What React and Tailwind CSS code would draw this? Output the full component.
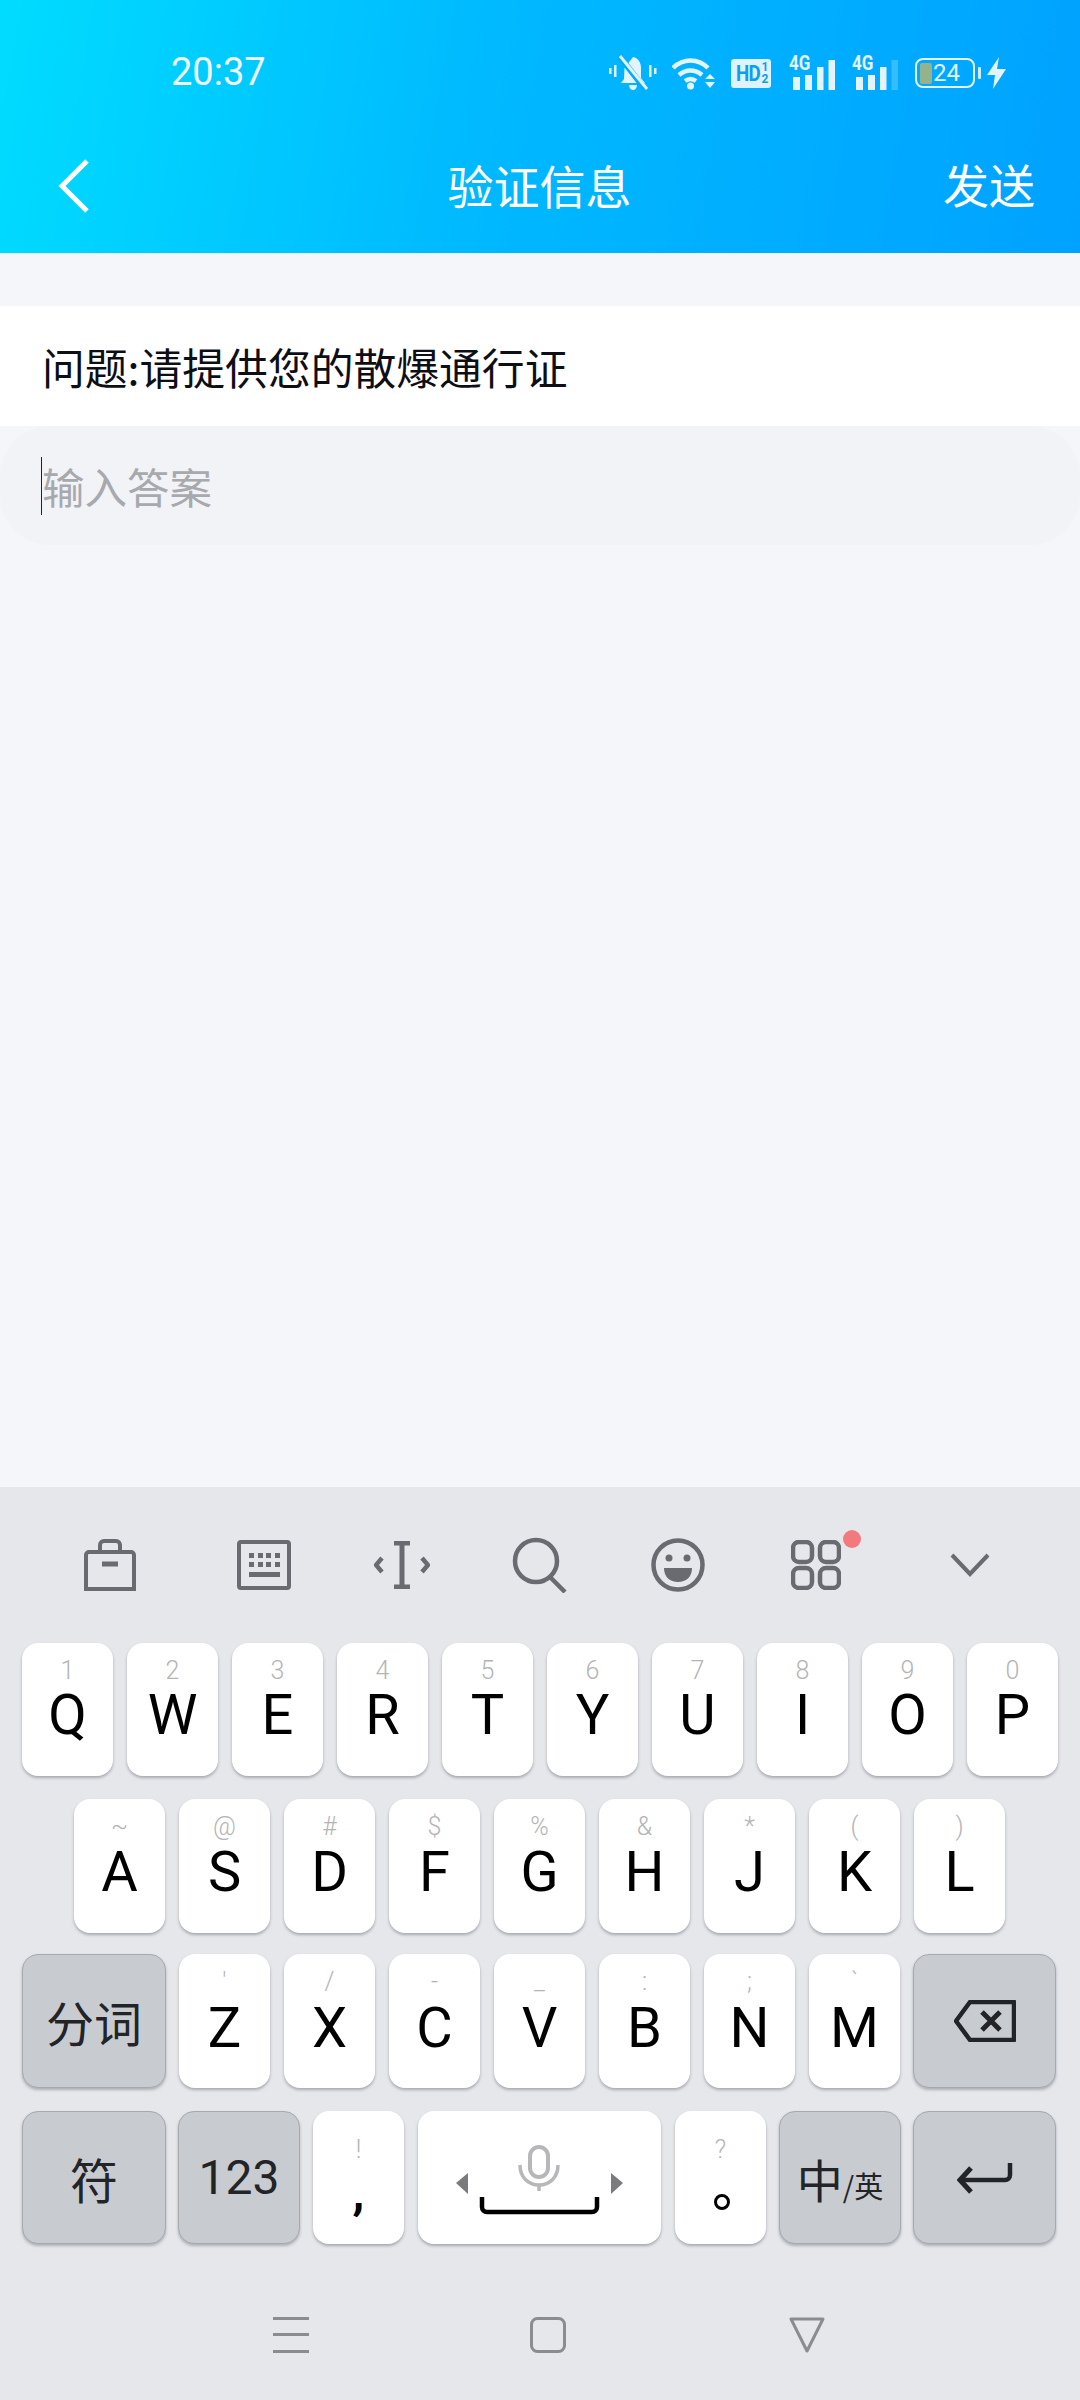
const CJK = '[font-family:"Noto_Sans_CJK_SC",sans-serif]';

const rows = [
  [['Q', '1'], ['W', '2'], ['E', '3'], ['R', '4'], ['T', '5'], ['Y', '6'], ['U', '7'], ['I', '8'], ['O', '9'], ['P', '0']],
  [['A', '~'], ['S', '@'], ['D', '#'], ['F', '$'], ['G', '%'], ['H', '&'], ['J', '*'], ['K', '('], ['L', ')']],
  [['Z', "'"], ['X', '/'], ['C', '-'], ['V', '_'], ['B', ':'], ['N', ';'], ['M', '`']],
];

function Key({ letter, hint, gap = 'mt-[3px]' }) {
  return (
    <div className="w-[91px] h-full bg-white rounded-[16px] shadow-[0_2px_3px_rgba(90,95,105,0.45)] flex flex-col items-center pt-[15px] font-['Roboto']">
      <span className="h-[26px] text-[25px] leading-[26px] font-light text-[#b4b4b6]">{hint}</span>
      <span className={`${gap} h-[56px] text-[56px] leading-[56px] text-black`}>{letter}</span>
    </div>
  );
}

function GrayKey({ className, children }) {
  return (
    <div className={`h-full bg-[#c8cbd0] border border-[#a6a9ae] rounded-[16px] shadow-[0_2px_3px_rgba(90,95,105,0.4)] flex items-center justify-center text-[#222427] ${className}`}>
      {children}
    </div>
  );
}

function SmallKey({ hint, className = '', children }) {
  return (
    <div className={`w-[91px] h-full bg-white rounded-[16px] shadow-[0_2px_3px_rgba(90,95,105,0.45)] flex flex-col items-center pt-[26px] font-['Roboto'] ${className}`}>
      <span className="h-[26px] text-[25px] leading-[26px] font-light text-[#b4b4b6]">{hint}</span>
      {children}
    </div>
  );
}

function StatusIcons() {
  const light = '#e3f4ff';
  return (
    <div className="flex items-center mt-[3px]">
      {/* muted bell */}
      <svg width="48" height="36" viewBox="0 0 48 36">
        <g fill={light}>
          <rect x="0" y="13" width="2.5" height="6" />
          <rect x="5" y="10" width="2.5" height="12" />
          <rect x="40" y="10" width="2.5" height="12" />
          <rect x="45" y="13" width="2.5" height="6" />
          <path d="M24 2c5 1 8 5 8 11v10l4 5H12l3-4 .5-11L24 2z" />
          <path d="M20 30h8c0 3-2 5-4 5s-4-2-4-5z" />
        </g>
        <path d="M11 2l25 32" stroke="#00aaff" strokeWidth="6" />
        <path d="M11 1l27 33" stroke={light} strokeWidth="3" />
      </svg>
      {/* wifi */}
      <svg width="44" height="34" viewBox="0 0 44 34" className="ml-[15px]">
        <g fill="none" stroke={light} strokeWidth="4.5">
          <path d="M1 12c10-10 25-10 35 0" />
          <path d="M7 19c7-6 16-6 23 0" />
          <path d="M13 25c4-3 7-3 11 0" />
        </g>
        <circle cx="18.5" cy="30" r="3.5" fill={light} />
        <path d="M33 23l5-5 5 5zM33 26h10l-5 6z" fill={light} />
      </svg>
      {/* HD */}
      <div className="ml-[15px] w-[40px] h-[29px] bg-[#dff2ff] rounded-[3px] flex items-center justify-center font-['Roboto'] font-bold text-[#0a9fef]">
        <span className="text-[22px] leading-[29px] tracking-[-1px] scale-x-[0.85]">HD</span>
        <span className="flex flex-col text-[12px] leading-[12px]">
          <span>1</span>
          <span>2</span>
        </span>
      </div>
      {/* sim 1 */}
      <Signal className="ml-[18px]" last={light} />
      {/* sim 2 */}
      <Signal className="ml-[17px]" last="#35bdff" />
      {/* battery */}
      <div className="ml-[17px] relative w-[60px] h-[30px] border-[2.5px] border-[#e3f4ff] rounded-[8px] flex items-center font-['Roboto'] text-[#e3f4ff]">
        <div className="ml-[3px] w-[12px] h-[21px] bg-[#94b38a] rounded-[2px]" />
        <span className="ml-[1px] text-[24px] leading-[24px]">24</span>
        <div className="absolute right-[-8px] top-[7px] w-[3px] h-[12px] bg-[#cdeeff] rounded-[1px]" />
      </div>
      <svg width="19" height="32" viewBox="0 0 19 32" className="ml-[12px]">
        <path d="M12 0L0 18h8l-2 14L19 12h-9z" fill={light} />
      </svg>
    </div>
  );
}

function Signal({ className, last }) {
  const light = '#e3f4ff';
  return (
    <div className={`relative w-[46px] h-[33px] ${className}`}>
      <span className="absolute left-0 top-[-4px] text-[20px] leading-[20px] font-bold font-['Roboto'] text-[#e3f4ff] scale-x-[0.85] origin-left">4G</span>
      <svg width="46" height="33" viewBox="0 0 46 33">
        <rect x="4" y="20" width="7" height="13" fill={light} />
        <rect x="16" y="18" width="7" height="15" fill={light} />
        <rect x="28" y="10" width="6.5" height="23" fill={light} />
        <rect x="39.5" y="3" width="6.5" height="30" fill={last} />
      </svg>
    </div>
  );
}

function ToolIcon({ children, className = '' }) {
  return <div className={`w-[138px] h-[64px] flex items-center justify-center ${className}`}>{children}</div>;
}

function Toolbar() {
  const c = '#6a6b70';
  return (
    <div className="h-[156px] px-[41px] flex items-center">
      <ToolIcon>
        <svg width="52" height="52" viewBox="0 0 52 52" fill="none" stroke={c} strokeWidth="4">
          <path d="M2 50V16a3 3 0 0 1 3-3h42a3 3 0 0 1 3 3v34z" />
          <path d="M16 13V6a4 4 0 0 1 4-4h12a4 4 0 0 1 4 4v7" />
          <path d="M18 25h16" strokeWidth="5" />
        </svg>
      </ToolIcon>
      <ToolIcon className="ml-[16px]">
        <svg width="54" height="50" viewBox="0 0 54 50" fill="none" stroke={c}>
          <rect x="2" y="2" width="50" height="46" rx="2" strokeWidth="4" />
          <g fill={c} stroke="none">
            <rect x="12" y="13" width="5" height="5" />
            <rect x="21" y="13" width="5" height="5" />
            <rect x="29" y="13" width="5" height="5" />
            <rect x="38" y="13" width="5" height="5" />
            <rect x="12" y="22" width="5" height="5" />
            <rect x="21" y="22" width="5" height="5" />
            <rect x="29" y="22" width="5" height="5" />
            <rect x="38" y="22" width="5" height="5" />
            <rect x="12" y="32" width="31" height="5" />
          </g>
        </svg>
      </ToolIcon>
      <ToolIcon>
        <svg width="56" height="48" viewBox="0 0 56 48" fill="none" stroke={c}>
          <path d="M20 2h16M28 2v44M20 46h16" strokeWidth="5" />
          <path d="M8 17l-6 7 6 7M48 17l6 7-6 7" strokeWidth="4.5" />
        </svg>
      </ToolIcon>
      <ToolIcon>
        <svg width="56" height="56" viewBox="0 0 56 56" fill="none" stroke={c} strokeWidth="4.5">
          <circle cx="24" cy="24" r="21" />
          <path d="M38 40l15 15" />
        </svg>
      </ToolIcon>
      <ToolIcon>
        <svg width="54" height="54" viewBox="0 0 54 54" fill="none" stroke={c}>
          <circle cx="27" cy="27" r="24.5" strokeWidth="4.5" />
          <circle cx="18" cy="20" r="3.5" fill={c} stroke="none" />
          <circle cx="36" cy="20" r="3.5" fill={c} stroke="none" />
          <path d="M13 30h28c0 9-6 14-14 14s-14-5-14-14z" fill={c} stroke="none" />
        </svg>
      </ToolIcon>
      <ToolIcon className="relative">
        <svg width="50" height="50" viewBox="0 0 50 50" fill="none" stroke={c} strokeWidth="4.5">
          <rect x="2" y="2" width="19" height="20" rx="6" />
          <rect x="29" y="2" width="19" height="20" rx="6" />
          <rect x="2" y="28" width="19" height="20" rx="6" />
          <rect x="29" y="28" width="19" height="20" rx="6" />
        </svg>
        <div className="absolute left-[96px] top-[-3px] w-[18px] h-[18px] rounded-full bg-[#f27a7f]" />
      </ToolIcon>
      <ToolIcon className="ml-[16px]">
        <svg width="40" height="24" viewBox="0 0 40 24" fill="none" stroke={c} strokeWidth="4">
          <path d="M2 2l18 19L38 2" />
        </svg>
      </ToolIcon>
    </div>
  );
}

export default function App() {
  return (
    <div className={`w-[1080px] h-[2400px] flex flex-col bg-[#f4f6fa] overflow-hidden ${CJK}`}>
      <header className="h-[253px] shrink-0 bg-[linear-gradient(100deg,#00dcff_0%,#00b9ff_45%,#00a2ff_100%)] text-white">
        <div className="h-[144px] pl-[171px] pr-[74px] pt-[52px] flex items-start justify-between">
          <span className="text-[38px] leading-[40px] font-['Roboto'] text-[#f2fbff]">20:37</span>
          <StatusIcons />
        </div>
        <div className="relative h-[80px] flex items-center justify-center">
          <svg width="32" height="54" viewBox="0 0 32 54" fill="none" stroke="#fff" strokeWidth="5" className="absolute left-[58px] top-[15px]">
            <path d="M29 2L4 27l25 25" />
          </svg>
          <span className="text-[46px] leading-[60px] -ml-[1px]">验证信息</span>
          <span className="absolute right-[45px] top-[9px] text-[46px] leading-[60px]">发送</span>
        </div>
      </header>

      <div className="flex-1 pt-[53px]">
        <div className="h-[120px] bg-white pl-[42px] flex items-center text-[42.8px] leading-[56px] text-[#0d0f14]">
          问题:请提供您的散爆通行证
        </div>
        <div className="h-[119px] bg-[#f1f3f7] rounded-[50px] pl-[41px] flex items-center">
          <div className="w-[1px] h-[58px] bg-[#222]" />
          <span className="text-[42.5px] leading-[56px] text-[#a8a9ad]">输入答案</span>
        </div>
      </div>

      <div className="h-[913px] shrink-0 bg-[#e5e7eb]">
        <Toolbar />
        <div className="h-[133px] pl-[22px] flex gap-[14px]">
          {rows[0].map(([l, h]) => <Key key={l} letter={l} hint={h} />)}
        </div>
        <div className="mt-[23px] h-[134px] pl-[74px] flex gap-[14px]">
          {rows[1].map(([l, h]) => <Key key={l} letter={l} hint={h} gap="mt-[4px]" />)}
        </div>
        <div className="mt-[21px] h-[134px] pl-[22px] flex gap-[13px]">
          <GrayKey className="w-[144px] text-[48px]">分词</GrayKey>
          <div className="flex gap-[14px]">
            {rows[2].map(([l, h]) => <Key key={l} letter={l} hint={h} gap="mt-[5px]" />)}
          </div>
          <GrayKey className="w-[143px]">
            <svg width="62" height="42" viewBox="0 0 62 42" fill="none" stroke="#222427" strokeWidth="4.5">
              <path d="M16 2h44v38H16L2 21z" strokeLinejoin="round" />
              <path d="M28 12l18 18M46 12L28 30" strokeWidth="5" />
            </svg>
          </GrayKey>
        </div>
        <div className="mt-[23px] h-[133px] pl-[22px] flex">
          <GrayKey className="w-[144px] text-[48px]">符</GrayKey>
          <GrayKey className="ml-[12px] w-[122px] text-[48px] font-['Roboto']">123</GrayKey>
          <SmallKey hint="!" className="ml-[13px]">
            <span className="mt-[6px] h-[48px] text-[48px] leading-[48px] font-bold text-black">,</span>
          </SmallKey>
          <div className="ml-[14px] w-[243px] h-full bg-white rounded-[16px] shadow-[0_2px_3px_rgba(90,95,105,0.45)] flex items-center justify-center">
            <svg width="243" height="133" viewBox="0 0 243 133">
              <path d="M50 62L38 72l12 11z" fill="#7b7b7d" />
              <path d="M193 62l12 10-12 11z" fill="#7b7b7d" />
              <g fill="none" stroke="#b7b7b9" strokeWidth="3.5">
                <rect x="112" y="36" width="18" height="30" rx="9" strokeWidth="4" />
                <path d="M102 54c0 12 8 20 19 20s19-8 19-20" />
                <path d="M121 74v6" />
              </g>
              <path d="M64 86v10a5 5 0 0 0 5 5h105a5 5 0 0 0 5-5V86" fill="none" stroke="#000" strokeWidth="4.5" />
            </svg>
          </div>
          <SmallKey hint="?" className="ml-[14px]">
            <div className="mt-[31px] ml-[3px] w-[16px] h-[16px] rounded-full border-[3.5px] border-black" />
          </SmallKey>
          <GrayKey className="ml-[13px] w-[122px]">
            <span className="text-[46px] leading-[56px]">中</span>
            <span className="mt-[14px] text-[29px] leading-[36px]">/英</span>
          </GrayKey>
          <GrayKey className="ml-[12px] w-[143px]">
            <svg width="56" height="32" viewBox="0 0 56 32" fill="none" stroke="#222427" strokeWidth="4.5">
              <path d="M53 1v12a5 5 0 0 1-5 5H4" />
              <path d="M14 6L3 18l11 12" strokeWidth="5" />
            </svg>
          </GrayKey>
        </div>
        <div className="mt-[73px] flex items-center pl-[273px]">
          <svg width="36" height="36" viewBox="0 0 36 36" fill="#8b8c90">
            <rect x="0" y="0" width="36" height="3" />
            <rect x="0" y="16" width="36" height="3" />
            <rect x="0" y="33" width="36" height="3" />
          </svg>
          <svg width="36" height="36" viewBox="0 0 36 36" fill="none" stroke="#8b8c90" strokeWidth="3" className="ml-[221px]">
            <rect x="1.5" y="1.5" width="33" height="33" rx="6" />
          </svg>
          <svg width="36" height="36" viewBox="0 0 36 36" fill="none" stroke="#8b8c90" strokeWidth="3" strokeLinejoin="round" className="ml-[223px]">
            <path d="M2 2h32L18 34z" />
          </svg>
        </div>
      </div>
    </div>
  );
}
